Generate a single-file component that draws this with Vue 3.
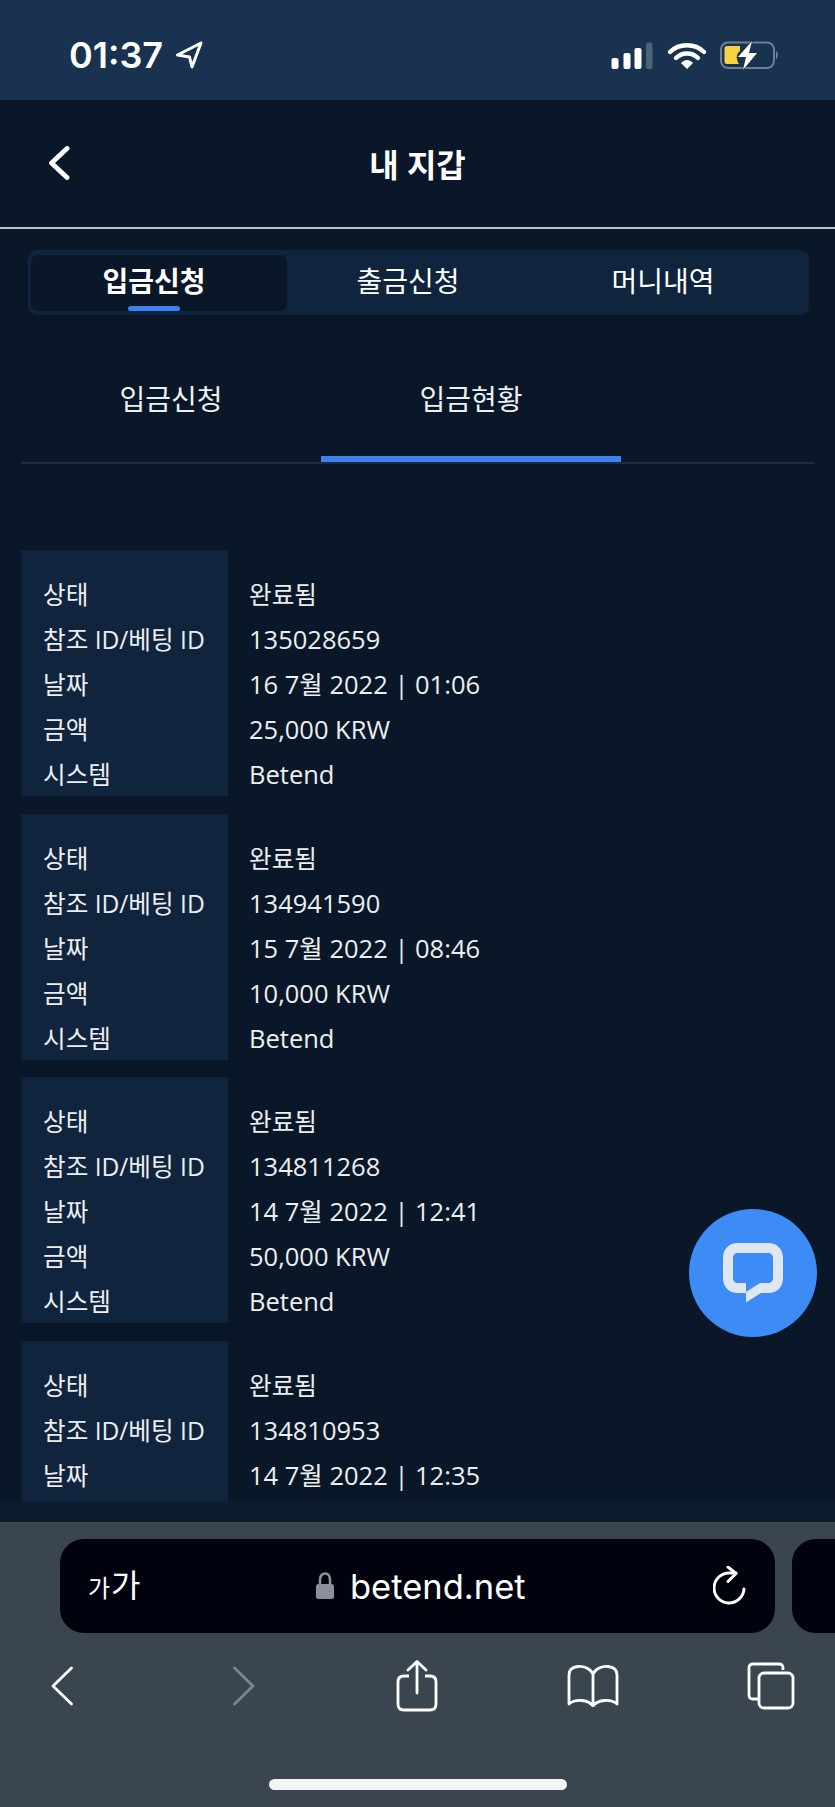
<script setup>
const records = [
  { id: '135028659', date: '16 7월 2022 | 01:06', amount: '25,000 KRW' },
  { id: '134941590', date: '15 7월 2022 | 08:46', amount: '10,000 KRW' },
  { id: '134811268', date: '14 7월 2022 | 12:41', amount: '50,000 KRW' },
  { id: '134810953', date: '14 7월 2022 | 12:35', partial: true },
]
</script>

<template>
  <div class="phone">
    <div class="status">
      <div class="clock">
        <span>01:37</span>
        <svg class="locarrow" width="30" height="30" viewBox="0 0 30 30">
          <path d="M27 3 L3.500 15 L15.500 17 L18 27 Z" fill="none" stroke="#fff" stroke-width="3" stroke-linejoin="round" />
        </svg>
      </div>
      <svg class="sys" width="170" height="30" viewBox="0 0 170 30">
        <rect x="0.500" y="17" width="7" height="11" rx="2" fill="#fff" />
        <rect x="12.500" y="12" width="7" height="16" rx="2" fill="#fff" />
        <rect x="23.500" y="7" width="7" height="21" rx="2" fill="#fff" />
        <rect x="35" y="1.500" width="6.500" height="26.500" rx="2" fill="#4c6279" />
        <path d="M59 11 C68 2 84 2 93 11" fill="none" stroke="#fff" stroke-width="4.400" stroke-linecap="round" />
        <path d="M65 17 C71 11 81 11 87 17" fill="none" stroke="#fff" stroke-width="4.400" stroke-linecap="round" />
        <path d="M70 22 C74 18 78 18 82 22 L76 28 Z" fill="#fff" />
        <rect x="110" y="1.500" width="53" height="25.500" rx="7" fill="none" stroke="#6d8092" stroke-width="2" />
        <path d="M165 10 C167.500 11 167.500 17 165 18 Z" fill="#6d8092" />
        <path d="M116 5 H129 V10 C125 13 125 18 128 23 H116 Q113.500 23 113.500 20.500 V7.500 Q113.500 5 116 5 Z" fill="#f7d344" />
        <path d="M141 0 L127 16 H135 L132 29 L146 12 H138 Z" fill="#fff" stroke="#193250" stroke-width="1.500" paint-order="stroke" />
      </svg>
    </div>

    <header class="topbar">
      <svg class="back" width="22" height="34" viewBox="0 0 22 34">
        <path d="M19 2.500 L3.500 17 L19 31.500" fill="none" stroke="#fff" stroke-width="4.800" stroke-linecap="round" stroke-linejoin="round" />
      </svg>
      <h1>내 지갑</h1>
    </header>

    <main class="content">
      <nav class="tabs">
        <div class="tab active">입금신청<i></i></div>
        <div class="tab second">출금신청</div>
        <div class="tab third">머니내역</div>
      </nav>

      <nav class="subtabs">
        <div class="subtab">입금신청</div>
        <div class="subtab current">입금현황</div>
      </nav>

      <div class="records">
        <section v-for="r in records" :key="r.id" class="record">
          <dl class="labels">
            <dt>상태</dt>
            <dt>참조 ID/베팅 ID</dt>
            <dt>날짜</dt>
            <template v-if="!r.partial">
              <dt>금액</dt>
              <dt>시스템</dt>
            </template>
          </dl>
          <dl class="values">
            <dd class="done">완료됨</dd>
            <dd>{{ r.id }}</dd>
            <dd>{{ r.date }}</dd>
            <template v-if="!r.partial">
              <dd>{{ r.amount }}</dd>
              <dd>Betend</dd>
            </template>
          </dl>
        </section>
      </div>
    </main>

    <div class="gutter"></div>

    <footer class="safari">
      <div class="urlrow">
        <div class="url">
          <div class="aa"><span class="aa-small">가</span><span>가</span></div>
          <div class="host">
            <svg width="20" height="28" viewBox="0 0 20 28">
              <path d="M5 13 V7.500 C5 -0.500 15 -0.500 15 7.500 V13" fill="none" stroke="#8d909b" stroke-width="2.600" />
              <rect x="1" y="12" width="18" height="15" rx="2.500" fill="#8d909b" />
            </svg>
            <span>betend.net</span>
          </div>
          <svg class="reload" width="34" height="40" viewBox="0 0 34 40">
            <path d="M23 7 H16 A15 15 0 1 0 31 23" fill="none" stroke="#fff" stroke-width="3" stroke-linecap="round" />
            <path d="M15 1 L23 7.500 L15 15.500" fill="none" stroke="#fff" stroke-width="3" stroke-linecap="round" stroke-linejoin="round" />
          </svg>
        </div>
        <div class="nexttab"></div>
      </div>
      <div class="tools">
        <svg width="24" height="40" viewBox="0 0 24 40">
          <path d="M21.500 2 L3 20 L21.500 38" fill="none" stroke="#fff" stroke-width="2.800" stroke-linecap="round" stroke-linejoin="round" />
        </svg>
        <svg class="t-fwd" width="24" height="40" viewBox="0 0 24 40">
          <path d="M2.500 2 L21 20 L2.500 38" fill="none" stroke="#7c868f" stroke-width="2.800" stroke-linecap="round" stroke-linejoin="round" />
        </svg>
        <svg class="t-share" width="42" height="52" viewBox="0 0 42 52">
          <path d="M13 16 H8 Q2 16 2 22 V44 Q2 50 8 50 H34 Q40 50 40 44 V22 Q40 16 34 16 H29" fill="none" stroke="#fff" stroke-width="2.800" />
          <path d="M21 33 V2 M12 10 L21 1.500 L30 10" fill="none" stroke="#fff" stroke-width="2.800" stroke-linecap="round" stroke-linejoin="round" />
        </svg>
        <svg class="t-book" width="52" height="42" viewBox="0 0 52 42">
          <path d="M26 9 C23 3 16 1 11 1.500 C5 2 2 5 2 10 V39 C8 34 21 34 26 41 C31 34 44 34 50 39 V10 C50 5 47 2 41 1.500 C36 1 29 3 26 9 Z M26 9 V41" fill="none" stroke="#fff" stroke-width="2.800" stroke-linejoin="round" />
        </svg>
        <svg class="t-tabs" width="48" height="48" viewBox="0 0 48 48">
          <path d="M36 8 V6 Q36 2 32 2 H6 Q2 2 2 6 V33 Q2 37 6 37 H12" fill="none" stroke="#fff" stroke-width="2.800" />
          <rect x="12" y="11" width="34" height="35" rx="5" fill="none" stroke="#fff" stroke-width="2.800" />
        </svg>
      </div>
      <div class="home"></div>
    </footer>

    <button class="chat" type="button" aria-label="chat">
      <svg width="60" height="60" viewBox="0 0 60 60">
        <path fill="#dfe8f0" fill-rule="evenodd" d="M15 0 H45 C54 0 60 6 60 15 V35 C60 44 54 50 45 50 H38 L23 59.500 V50 H15 C6 50 0 44 0 35 V15 C0 6 6 0 15 0 Z M15 10 C12 10 10 12 10 15 V35 C10 38 12 40 15 40 H23 V49 L37 40 H45 C48 40 50 38 50 35 V15 C50 12 48 10 45 10 Z" />
      </svg>
    </button>
  </div>
</template>

<style>
html, body { margin: 0; background: #0a1728; }
</style>

<style scoped>
.phone {
  position: relative;
  width: 835px;
  height: 1807px;
  overflow: hidden;
  display: flex;
  flex-direction: column;
  background: #0a1728;
  color: #fff;
  font-family: "Open Sans", "Noto Sans CJK KR", sans-serif;
}
.status {
  flex: none;
  height: 100px;
  box-sizing: border-box;
  padding: 40px 54px 0 69px;
  display: flex;
  justify-content: space-between;
  align-items: flex-start;
  background: #193250;
}
.clock {
  display: flex;
  align-items: center;
  gap: 11px;
  height: 30px;
  font-family: Inter, sans-serif;
  font-size: 36px;
  font-weight: 600;
}
.locarrow { flex: none; }
.sys { margin-top: 1px; }
.topbar {
  flex: none;
  position: relative;
  height: 127px;
  box-sizing: content-box;
  display: flex;
  align-items: center;
  justify-content: center;
  border-bottom: 2px solid #c0c3c7;
}
.topbar h1 {
  margin: 0 0 2px;
  font-size: 32px;
  font-weight: 700;
}
.back {
  position: absolute;
  left: 48px;
  top: 46px;
}
.content {
  flex: none;
  height: 1272px;
  overflow: hidden;
  padding: 21px 21px 0;
  box-sizing: border-box;
}
.tabs {
  margin: 0 5px 0 7px;
  height: 65px;
  box-sizing: border-box;
  padding: 5px 3px 4px;
  display: flex;
  background: #10243e;
  border-radius: 9px;
}
.tab {
  position: relative;
  flex: none;
  display: flex;
  align-items: center;
  justify-content: center;
  font-size: 28px;
  padding-bottom: 6px;
  box-sizing: border-box;
  border-radius: 7px;
}
.tab.active {
  width: 256px;
  padding-right: 10px;
  background: #0a1728;
  font-weight: 700;
}
.tab.second { width: 242px; }
.tab.third { width: 268px; }
.tab i {
  position: absolute;
  left: 97px;
  bottom: 0;
  width: 52px;
  height: 5px;
  border-radius: 3px;
  background: #3b82f0;
}
.subtabs {
  margin-top: 47px;
  height: 100px;
  display: flex;
  border-bottom: 2px solid #1e2c3d;
}
.subtab {
  position: relative;
  width: 300px;
  height: 100px;
  padding-bottom: 28px;
  box-sizing: border-box;
  display: flex;
  align-items: center;
  justify-content: center;
  font-size: 28px;
  color: #eef0f2;
}
.subtab.current::after {
  content: "";
  position: absolute;
  left: 0;
  right: 0;
  bottom: 0;
  height: 6px;
  background: #3b82f0;
}
.records {
  margin-top: 86px;
  display: flex;
  flex-direction: column;
  gap: 17.5px;
}
.record {
  display: flex;
  flex: none;
  height: 246px;
  color: #eceef0;
}
.labels, .values {
  margin: 0;
  padding-top: 22px;
  box-sizing: border-box;
}
.labels {
  width: 207px;
  padding-left: 22px;
  background: #10243e;
  font-size: 24.6px;
}
.values {
  padding-left: 21px;
  font-size: 25.500px;
}
dd.done { font-size: 24.600px; }
dt, dd {
  margin: 0;
  height: 45px;
  line-height: 45px;
  white-space: nowrap;
}
.gutter {
  flex: none;
  height: 21px;
  background: #0c1b2d;
}
.safari {
  flex: 1;
  display: flex;
  flex-direction: column;
  background: #3a4550;
  padding-top: 17px;
  min-height: 0;
}
.urlrow {
  flex: none;
  display: flex;
  gap: 17px;
  height: 94px;
  padding-left: 60px;
}
.url {
  flex: none;
  width: 715px;
  box-sizing: border-box;
  padding: 0 28px 0 28px;
  border-radius: 24px;
  background: #00020e;
  display: flex;
  align-items: center;
}
.nexttab {
  flex: 1;
  border-radius: 24px 0 0 24px;
  background: #00020e;
}
.aa {
  flex: none;
  width: 53px;
  display: flex;
  align-items: baseline;
  font-size: 32px;
  line-height: 36px;
  white-space: nowrap;
}
.aa-small { font-size: 24px; margin-right: 1px; }
.host {
  flex: none;
  display: flex;
  align-items: center;
  gap: 15px;
  margin-left: 174px;
  font-family: Inter, sans-serif;
  font-size: 34.500px;
}
.reload {
  flex: none;
  margin-left: auto;
}
.tools {
  flex: none;
  margin-top: 27px;
  padding-left: 50px;
  height: 52px;
  display: flex;
  align-items: center;
}
.t-fwd { margin-left: 158px; }
.t-share { margin-left: 140px; }
.t-book { margin-left: 129px; }
.t-tabs { margin-left: 128px; }
.home {
  flex: none;
  align-self: center;
  width: 298px;
  height: 11px;
  margin-top: 67px;
  border-radius: 6px;
  background: #f4f4f4;
}
.chat {
  position: absolute;
  left: 689px;
  top: 1209px;
  width: 128px;
  height: 128px;
  padding: 0;
  border: 0;
  border-radius: 50%;
  background: #3d8bf5;
  display: flex;
  align-items: center;
  justify-content: center;
}
</style>
